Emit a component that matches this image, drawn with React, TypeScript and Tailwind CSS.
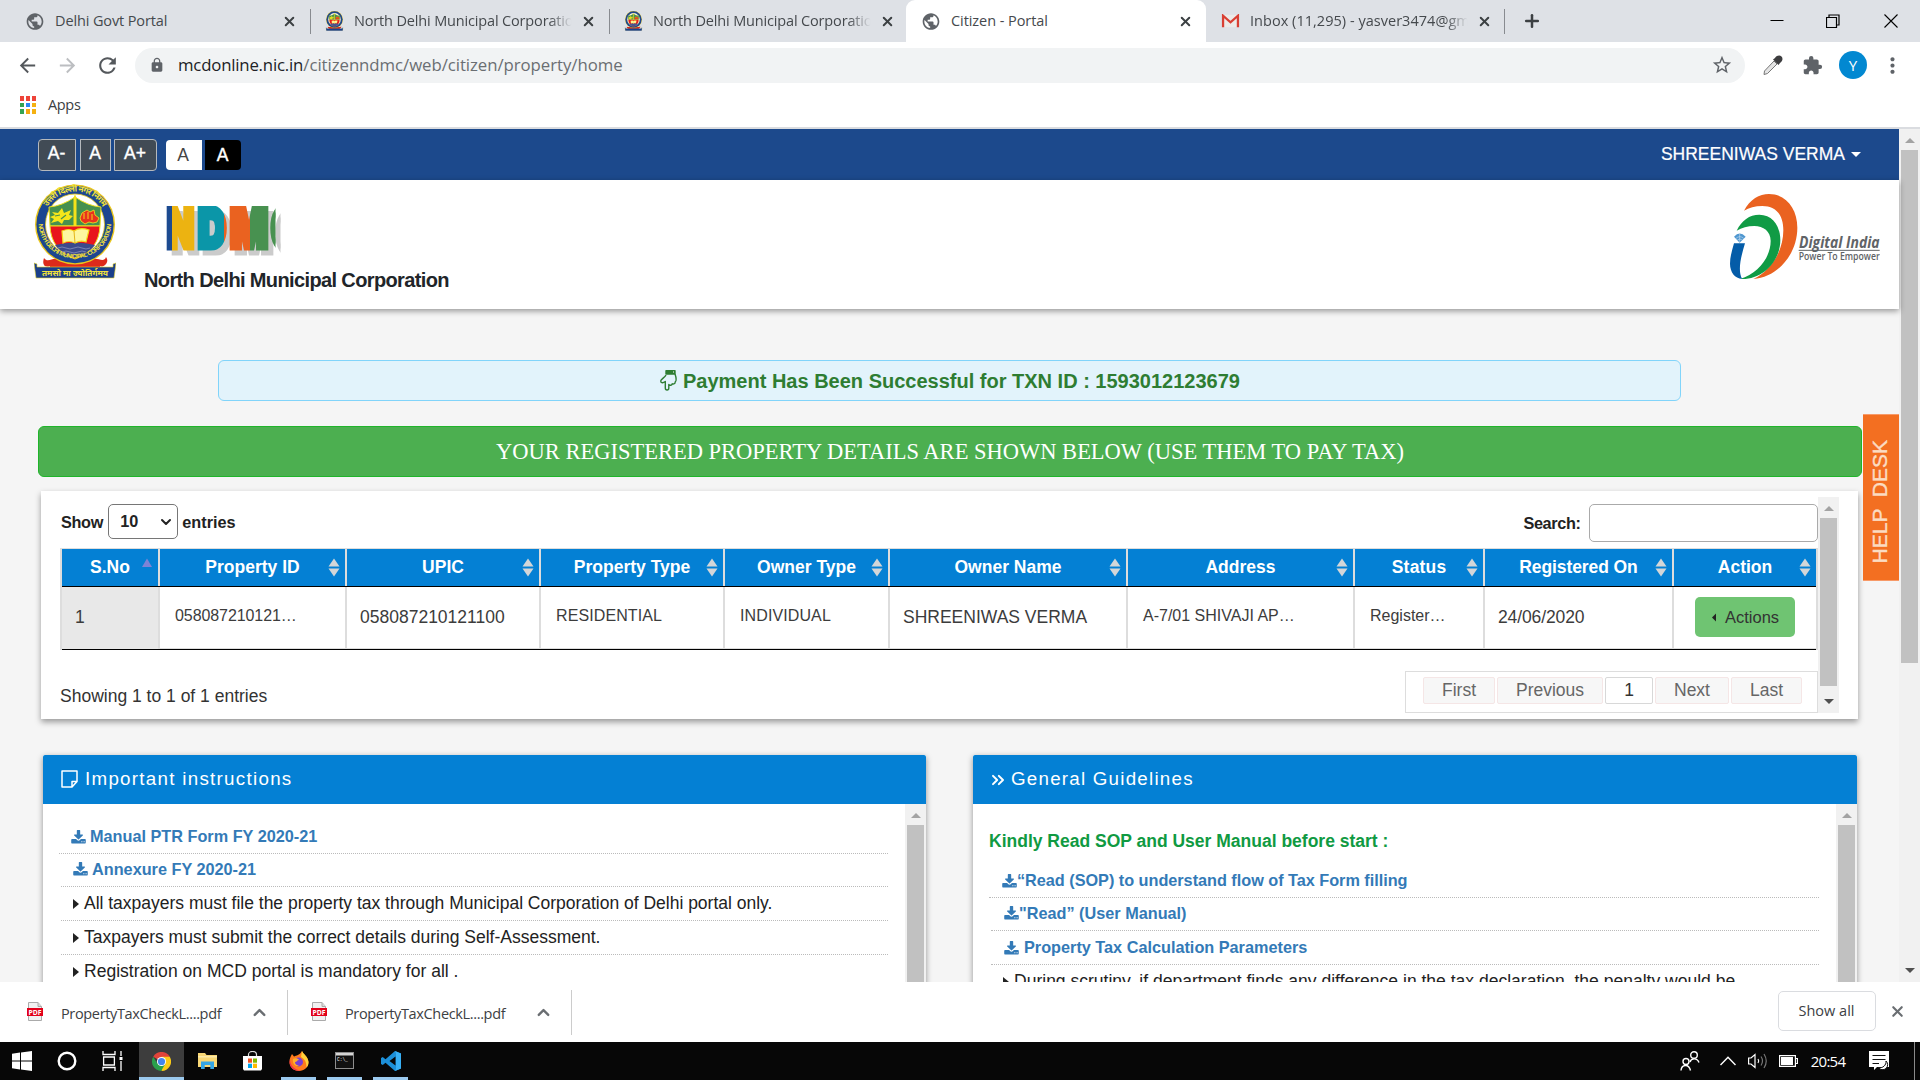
import React, { useLayoutEffect, useRef } from "react";
import { MdPublic, MdExtension, MdLock, MdStarBorder, MdRefresh, MdArrowBack, MdArrowForward, MdMoreVert } from "react-icons/md";
import { X, Plus, ChevronUp, ChevronDown, ChevronsRight } from "lucide-react";

/** A one-line label whose letters are spaced so that it is exactly `w` pixels wide. */
function Label({ w, children, className = "" }: { w: number; children: string; className?: string }) {
  const ref = useRef<HTMLSpanElement>(null);
  useLayoutEffect(() => {
    const el = ref.current;
    if (!el) return;
    el.style.letterSpacing = "0px";
    const spacing = (w - el.offsetWidth) / Math.max(1, children.length - 1);
    el.style.letterSpacing = `${spacing}px`;
    el.style.marginRight = `${-spacing}px`;
  }, [w, children]);
  return (
    <span ref={ref} className={`inline-block shrink-0 whitespace-pre ${className}`}>
      {children}
    </span>
  );
}

function Emblem({ className, lettered = false }: { className: string; lettered?: boolean }) {
  return (
    <svg viewBox="0 0 82 95" className={className}>
      <path d="M10 74 C14 80 20 72 24 76 L58 76 C62 72 70 80 72 73 C76 78 70 84 66 82 L68 88 H14 L16 82 C10 84 8 80 10 74Z" fill="#dd2a1b" />
      <ellipse cx="41" cy="40.5" rx="40" ry="40" fill="#e9c61c" />
      <ellipse cx="41" cy="40.5" rx="38.6" ry="38.8" fill="#1c4690" />
      <ellipse cx="41" cy="40.5" rx="29.5" ry="30.5" fill="#fff" stroke="#e9c61c" strokeWidth="0.8" />
      <path d="M15 23 Q28 22 41 13 Q54 22 67 23 L66 42 H16Z" fill="#46904f" stroke="#eee020" />
      <path d="M16 42 H66 Q65 66 41 75 Q17 66 16 42Z" fill="#e8151d" stroke="#eee020" />
      <path d="M21 61 Q41 56 61 61 Q54 70 41 74 Q28 70 21 61Z" fill="#3b4a8c" />
      <path d="M24 64 q4 -2 8 0 t8 0 t8 0 t8 0 M28 68 q4 -2 8 0 t8 0 t8 0" stroke="#7f89b5" fill="none" strokeWidth="0.9" />
      <path d="M39.5 14 L41 10 L42.5 14 V42 H39.5Z" fill="#f5e21a" />
      <path d="M18 28 l6 1 4 -5 2 5 7 -3 -2 5 4 1 -4 4 -5 0 -2 4 -4 -3 -7 2 3 -4 -4 -2 5 -2z" fill="#f5e61a" />
      <path d="M21 32 l5 -1 M27 35 l5 -4" stroke="#46904f" strokeWidth="1.2" />
      <path d="M46 34 l2 -5 5 -3 3 2 4 -2 1 5 4 3 -2 4 -4 1 -4 -1 -4 2 -4 -3z" fill="#e8321d" stroke="#f5e61a" strokeWidth="0.8" />
      <path d="M50 29 v6 M54 28 v7 M58 30 v6" stroke="#f5e61a" strokeWidth="0.9" />
      <path d="M28 47 Q35 44 40 47 Q46 43 55 46 L52 58 Q46 56 41 59 Q35 56 29 59Z" fill="#fdf6a0" stroke="#f5d91a" strokeWidth="1.2" />
      <path d="M40 47 L41 59" stroke="#e4b51a" />
      <path d="M0 79 L3 80 L3 83 H79 V80 L82 79 L80 94 H2Z" fill="#1b3f8b" stroke="#e9d52a" strokeWidth="0.6" />
      {lettered && (
        <>
          <defs>
            <path id="ringTop" d="M9.5 32 A32.5 32.5 0 0 1 72.5 32" />
            <path id="ringBottom" d="M4.6 38 A36.4 36.4 0 0 0 77.4 38" />
          </defs>
          <text fontSize="8.4" fontWeight="700" fill="#f1e23a" fontFamily="'Noto Sans', 'Noto Sans Devanagari', sans-serif">
            <textPath href="#ringTop" startOffset="10" textLength="66">उत्तरी दिल्ली नगर निगम</textPath>
          </text>
          <text fontSize="6.2" fontWeight="700" fill="#f1e23a" fontFamily="'Liberation Sans', sans-serif">
            <textPath href="#ringBottom" startOffset="2" textLength="110">NORTH DELHI MUNICIPAL CORPORATION</textPath>
          </text>
          <text x="8" y="91.5" fontSize="8" fontWeight="700" fill="#f1e23a" textLength="66" lengthAdjust="spacingAndGlyphs" fontFamily="'Noto Sans', 'Noto Sans Devanagari', sans-serif">तमसो मा ज्योतिर्गमय</text>
        </>
      )}
    </svg>
  );
}

function NdmcMark() {
  return (
    <svg viewBox="0 0 115 52" className="h-[52px] w-[115px] drop-shadow-[5px_5px_0_#cbcbcb]" fontFamily="Inter, 'Liberation Sans', sans-serif" fontWeight="900" fontSize="54.5" strokeWidth="6">
      <defs>
        <linearGradient id="ndmc" gradientUnits="userSpaceOnUse" x1="0" y1="0" x2="115" y2="0">
          <stop offset="0.053" stopColor="#1c4a90" />
          <stop offset="0.053" stopColor="#ecb311" />
          <stop offset="0.26" stopColor="#ecb311" />
          <stop offset="0.26" stopColor="#0b96a8" />
          <stop offset="0.5" stopColor="#0b96a8" />
          <stop offset="0.5" stopColor="#ea6220" />
          <stop offset="0.73" stopColor="#ea6220" />
          <stop offset="0.73" stopColor="#489150" />
        </linearGradient>
        <clipPath id="ndmcFront"><rect width="109.5" height="44.5" /></clipPath>
      </defs>
      <g clipPath="url(#ndmcFront)" fill="url(#ndmc)" stroke="url(#ndmc)">
        <text x="1" y="41.5" textLength="27" lengthAdjust="spacingAndGlyphs">N</text>
        <text x="32" y="41.5" textLength="28" lengthAdjust="spacingAndGlyphs">D</text>
        <text x="64" y="41.5" textLength="38" lengthAdjust="spacingAndGlyphs">M</text>
        <text x="105" y="41.5" textLength="26" lengthAdjust="spacingAndGlyphs">C</text>
      </g>
    </svg>
  );
}

function DigitalIndia() {
  return (
    <svg viewBox="90 71 450 258" className="h-[86px] w-[150px]">
      <path d="M132 121 C150 87 178 71 207 71 C258 71 292 115 292 172 C292 250 235 320 160 326 C215 300 250 240 250 180 C250 130 225 107 187 107 C165 107 147 112 132 121Z" fill="#ea6220" />
      <path d="M110 181 C125 150 148 133 178 133 C217 133 241 165 241 210 C241 270 190 330 120 326 C175 310 212 260 212 212 C212 183 190 167 163 167 C143 167 125 172 110 181Z" fill="#109b45" />
      <path d="M102 219 L135 219 C124 255 112 300 126 325 C105 325 90 305 90 280 C90 260 96 240 102 219Z" fill="#045ca8" />
      <path d="M102 199 Q119 180 137 199 L119 217Z" fill="#4f97d0" />
      <path d="M108 204 Q119 194 131 204 M112 209 Q119 203 127 209 M119 190 V215" stroke="#d5e6f5" strokeWidth="1.6" fill="none" />
      <g fontFamily="'Open Sans', sans-serif" fill="#606366">
        <text x="297" y="234" fontSize="47" fontWeight="700" fontStyle="italic" textLength="242" lengthAdjust="spacingAndGlyphs">Digital India</text>
        <text x="296" y="270" fontSize="30" fontWeight="600" textLength="243" lengthAdjust="spacingAndGlyphs">Power To Empower</text>
      </g>
      <path d="M296 240 H539" stroke="#606366" strokeWidth="3" />
    </svg>
  );
}

function Gmail() {
  return (
    <svg viewBox="0 0 20 16" className="h-[14px] w-[19px]">
      <rect x="1" y="1" width="18" height="14" fill="#eceae8" />
      <path d="M1.5 15 V2 L10 9.5 L18.5 2 V15" fill="none" stroke="#d93f33" strokeWidth="2.6" />
    </svg>
  );
}

function Tab({ icon, title, w, fade = false }: { icon: React.ReactNode; title: string; w: number; fade?: boolean }) {
  return (
    <>
      <span className="flex w-5 shrink-0 justify-center">{icon}</span>
      <span className={fade ? "ml-[10px] w-[222px] shrink-0 overflow-hidden pb-[2px] [mask-image:linear-gradient(90deg,#000_88%,transparent_98%)]" : "ml-[10px] w-[222px] shrink-0 pb-[2px]"}>
        <Label w={w} className="text-[14.5px] text-[#45494d]">{title}</Label>
      </span>
      <X className="ml-[5px] size-[15px] shrink-0 text-[#3c4043]" strokeWidth={3.2} />
    </>
  );
}

function TabStrip() {
  const globe = <MdPublic className="size-[21px] text-[#5f6368]" />;
  const crest = <Emblem className="h-[20px] w-[19px]" />;
  return (
    <div className="flex h-[42px] items-center bg-[#dee1e6]">
      <div className="flex h-[25px] w-[311px] items-center border-r border-[#888b90] pl-[25px]">
        <Tab icon={globe} title="Delhi Govt Portal" w={112} />
      </div>
      <div className="flex h-[25px] w-[299px] items-center border-r border-[#888b90] pl-[13px]">
        <Tab icon={crest} title="North Delhi Municipal Corporation" w={228} fade />
      </div>
      <div className="flex h-[42px] w-[296px] items-center pl-[13px]">
        <Tab icon={crest} title="North Delhi Municipal Corporation" w={228} fade />
      </div>
      <div className="flex h-[42px] w-[300px] items-center rounded-t-[9px] bg-white pl-[15px]">
        <Tab icon={globe} title="Citizen - Portal" w={97} />
      </div>
      <div className="flex h-[25px] w-[299px] items-center border-r border-[#888b90] pl-[14px]">
        <Tab icon={<Gmail />} title="Inbox (11,295) - yasver3474@gmail" w={235} fade />
      </div>
      <Plus className="ml-[17px] size-5 text-[#3c4043]" strokeWidth={3} />
      <div className="ml-auto flex h-[36px] items-center">
        <svg viewBox="0 0 14 14" className="mr-[42px] size-[14px]"><path d="M0.5 6.5 H13.5" stroke="#000" /></svg>
        <svg viewBox="0 0 14 14" className="mr-[44px] size-[14px]"><path d="M0.5 3.5 H10.5 V13.5 H0.5Z M3 3 V1 H13 V11 H11" fill="none" stroke="#000" strokeWidth="1.2" /></svg>
        <svg viewBox="0 0 14 14" className="mr-[22px] size-[14px]"><path d="M0.5 0.5 L13.5 13.5 M13.5 0.5 L0.5 13.5" stroke="#000" strokeWidth="1.1" /></svg>
      </div>
    </div>
  );
}

function Dropper() {
  return (
    <svg viewBox="0 0 20 20" className="ml-[18px] size-5">
      <path d="M11 6 L14 9 L4.5 18.5 L1 19.5 L1.5 16Z" fill="#e4e4e4" stroke="#777" />
      <path d="M10 4.5 L12 3 C14 0 17 0 18.5 1.5 C20 3 20 6 17 8 L15.5 10Z" fill="#3d3d3f" />
    </svg>
  );
}

function Toolbar() {
  return (
    <div className="flex h-[46px] items-center bg-white">
      <MdArrowBack className="ml-[16px] size-[23px] text-[#54585c]" />
      <MdArrowForward className="ml-[17px] size-[23px] text-[#bcbec1]" />
      <MdRefresh className="ml-[16px] size-[25px] text-[#54585c]" />
      <div className="ml-[15px] flex h-[35px] w-[1610px] items-center rounded-full bg-[#f1f3f4] pl-[14px] pr-[12px]">
        <MdLock className="size-4 text-[#5f6368]" />
        <span className="ml-[13px] flex text-[16.8px]">
          <Label w={125} className="text-[#202124]">mcdonline.nic.in</Label>
          <Label w={319} className="text-[#6a6e72]">/citizenndmc/web/citizen/property/home</Label>
        </span>
        <MdStarBorder className="ml-auto size-[22px] text-[#5f6368]" />
      </div>
      <Dropper />
      <MdExtension className="ml-[19px] size-[21px] text-[#5f6368]" />
      <span className="ml-[16px] flex size-[28px] items-center justify-center rounded-full bg-[#0288d1] text-[15px] text-white">Y</span>
      <MdMoreVert className="ml-[13px] size-[25px] text-[#5f6368]" />
    </div>
  );
}

function AppsBar() {
  const colours = ["bg-[#ee4439]", "bg-[#ee4439]", "bg-[#ee4439]", "bg-[#34a352]", "bg-[#2b86f3]", "bg-[#f5b111]", "bg-[#34a352]", "bg-[#f5a70f]", "bg-[#f5b111]"];
  return (
    <div className="flex h-[41px] items-start border-b-2 border-[#dadce0] bg-white pt-[8px]">
      <div className="ml-[20px] grid grid-cols-3 gap-[2px]">
        {colours.map((c, i) => <span key={i} className={`h-[4.5px] w-1 ${c}`} />)}
      </div>
      <Label w={33} className="ml-[12px] mt-[-1px] text-[14.5px] leading-[20px] text-[#3c4043]">Apps</Label>
    </div>
  );
}

/** Vertical scrollbar: an up arrow, then the thumb. */
function ScrollBar({ className, thumb, down = false }: { className: string; thumb: string; down?: boolean }) {
  return (
    <div className={`flex w-[21px] shrink-0 flex-col items-center bg-[#f1f1f1] ${className}`}>
      <svg viewBox="0 0 10 5" className="mb-[7px] mt-[9px] h-[5px] w-[10px] shrink-0"><path d="M0 5 L5 0 L10 5Z" fill="#a3a3a3" /></svg>
      <div className={`w-[17px] shrink-0 bg-[#c1c1c1] ${thumb}`} />
      {down && <svg viewBox="0 0 10 5" className="mb-[9px] mt-auto h-[5px] w-[10px] shrink-0"><path d="M0 0 L5 5 L10 0Z" fill="#505050" /></svg>}
    </div>
  );
}

function TopBar() {
  const box = "flex h-[32px] items-start justify-center border border-[#b5b9bd] bg-[#414b55] pt-[3px] pr-[1px] text-[17.5px] leading-[20px] text-white [-webkit-text-stroke:0.4px_white]";
  return (
    <div className="flex h-[51px] items-center bg-[#1c498c] pl-[38px]">
      <span className={`${box} w-[38px] rounded-l-[4px]`}>A-</span>
      <span className={`${box} ml-[4px] w-[31px]`}>A</span>
      <span className={`${box} ml-[3px] w-[43px] rounded-r-[4px]`}>A+</span>
      <span className="ml-[9px] flex h-[30px] w-[36px] items-center justify-center rounded-l-[4px] bg-white pr-[2px] pt-[2px] text-[17.5px] text-[#444]">A</span>
      <span className="ml-[3px] flex h-[30px] w-[36px] items-center justify-center rounded-r-[4px] bg-black pr-px pt-[2px] text-[17.5px] text-white [-webkit-text-stroke:0.4px_white]">A</span>
      <div className="ml-auto mr-[38px] flex items-center">
        <Label w={184} className="text-[17.5px] text-white [-webkit-text-stroke:0.2px_white]">SHREENIWAS VERMA</Label>
        <svg viewBox="0 0 10 5" className="ml-[6px] h-[5px] w-[10px]"><path d="M0 0 H10 L5 5Z" fill="#fff" /></svg>
      </div>
    </div>
  );
}

function SortIcon({ asc = false }: { asc?: boolean }) {
  return (
    <svg viewBox="0 0 12 19" className="ml-px h-[19px] w-[12px]">
      {asc ? (
        <path d="M1 9 L6 0.5 L11 9Z" fill="#7e83d6" />
      ) : (
        <path d="M0.5 8.5 L6 0.5 L11.5 8.5Z M0.5 10.5 L6 18.5 L11.5 10.5Z" fill="#d3d6d8" />
      )}
    </svg>
  );
}

const COLS = "grid grid-cols-[98px_187px_194px_184px_165px_238px_227px_130px_189px_142px]";

const HEADS: [string, number][] = [
  ["S.No", 40], ["Property ID", 94], ["UPIC", 42], ["Property Type", 116], ["Owner Type", 99],
  ["Owner Name", 107], ["Address", 70], ["Status", 54], ["Registered On", 119], ["Action", 54],
];

const CELLS: [string, number, string][] = [
  ["058087210121…", 122, "pl-[15px] pb-1 text-[16px]"],
  ["058087210121100", 145, "pl-[13px] pb-[2px] text-[17.5px]"],
  ["RESIDENTIAL", 106, "pl-[15px] pb-1 text-[16px]"],
  ["INDIVIDUAL", 91, "pl-[15px] pb-1 text-[16px]"],
  ["SHREENIWAS VERMA", 184, "pl-[13px] pb-[2px] text-[17.5px]"],
  ["A-7/01 SHIVAJI AP…", 152, "pl-[15px] pb-1 text-[16px]"],
  ["Register…", 76, "pl-[15px] pb-1 text-[16px]"],
  ["24/06/2020", 87, "pl-[13px] pb-[2px] text-[17.5px]"],
];

function PropertyTable() {
  return (
    <div className="border-l-2 border-r-2 border-[#ddd]">
      <div className={`${COLS} h-[39px] border-b border-t border-b-black border-t-[#ddd] bg-[#0480d4]`}>
        {HEADS.map(([t, w], i) => (
          <div key={t} className={`flex items-center ${i < 9 ? "border-r-2 border-[#ddd]" : ""}`}>
            <span className="w-[18px]" />
            <span className="flex flex-1 justify-center"><Label w={w} className="text-[17.5px] font-bold text-white">{t}</Label></span>
            <span className="w-[18px]"><SortIcon asc={i === 0} /></span>
          </div>
        ))}
      </div>
      <div className={`${COLS} h-[63px] border-b border-b-black text-[#3c3c3c] shadow-[inset_0_-1px_0_#ddd]`}>
        <div className="flex items-center border-r-2 border-[#ddd] bg-[#e8e8e8] pb-[2px] pl-[13px] text-[17.5px]">1</div>
        {CELLS.map(([t, w, c]) => (
          <div key={t} className={`flex items-center border-r-2 border-[#ddd] ${c}`}><Label w={w}>{t}</Label></div>
        ))}
        <div className="flex items-center justify-center pb-[2px]">
          <button className="flex h-[40px] w-[100px] items-center rounded-[5px] bg-[#6fc472] pl-[17px] text-[#333]">
            <svg viewBox="0 0 5 10" className="h-[9px] w-[4px]"><path d="M5 0 V10 L0 5Z" fill="#222" /></svg>
            <Label w={54} className="ml-[9px] text-[16.5px]">Actions</Label>
          </button>
        </div>
      </div>
    </div>
  );
}

function PageButton({ label, w, className }: { label: string; w: number; className: string }) {
  return (
    <span className={`flex h-[27px] items-center justify-center rounded-[2px] border text-[17.5px] ${className}`}><Label w={w}>{label}</Label></span>
  );
}

function TableCard() {
  const idle = "border-[#f5e6e6] bg-[#f7f7f7] text-[#666]";
  return (
    <section className="ml-[41px] mt-[14px] flex h-[228px] w-[1817px] bg-white pt-[6px] shadow-[0_3px_6px_rgba(0,0,0,0.38)]">
      <div className="ml-[19px] w-[1758px]">
        <div className="flex h-[51px] items-start pt-[7px] text-[16.25px] font-bold text-[#222]">
          <Label w={42} className="ml-[1px] mt-[6px]">Show</Label>
          <span className="ml-[5px] flex h-[35px] w-[70px] items-center rounded-[5px] border border-[#767676] bg-white pl-[11px]">
            <Label w={18}>10</Label>
            <ChevronDown className="ml-[20px] size-[16px] shrink-0" strokeWidth={3} />
          </span>
          <Label w={53} className="ml-[4px] mt-[6px]">entries</Label>
          <Label w={58} className="ml-auto mt-[7px]">Search:</Label>
          <span className="ml-[8px] h-[38px] w-[229px] rounded-[5px] border border-[#aaa] bg-white" />
        </div>
        <PropertyTable />
        <div className="flex items-start text-[#333]">
          <Label w={207} className="mt-[33px] text-[17.5px]">Showing 1 to 1 of 1 entries</Label>
          <div className="ml-auto mt-[21px] flex h-[42px] w-[413px] gap-[2px] border border-[#ddd] pl-[17px] pt-[5px]">
            <PageButton label="First" w={34} className={`w-[72px] ${idle}`} />
            <PageButton label="Previous" w={68} className={`w-[106px] ${idle}`} />
            <PageButton label="1" w={9} className="w-[48px] border-[#d8d8d8] bg-white text-[#333]" />
            <PageButton label="Next" w={36} className={`w-[74px] ${idle}`} />
            <PageButton label="Last" w={33} className={`w-[71px] ${idle}`} />
          </div>
        </div>
      </div>
      <ScrollBar className="h-[216px]" thumb="h-[168px]" down />
    </section>
  );
}

function DownloadGlyph() {
  return (
    <svg viewBox="64 0 1664 1600" className="h-[14px] w-[15px] shrink-0" fill="#337ab7">
      <path d="M1344 1344q0-26-19-45t-45-19-45 19-19 45 19 45 45 19 45-19 19-45zm256 0q0-26-19-45t-45-19-45 19-19 45 19 45 45 19 45-19 19-45zm128-224v320q0 40-28 68t-68 28h-1472q-40 0-68-28t-28-68v-320q0-40 28-68t68-28h465l135 136q58 56 136 56t136-56l136-136h464q40 0 68 28t28 68zm-325-569q17 41-14 70l-448 448q-18 19-45 19t-45-19l-448-448q-31-29-14-70 17-39 59-39h256v-448q0-26 19-45t45-19h256q26 0 45 19t19 45v448h256q42 0 59 39z" />
    </svg>
  );
}

function Link({ text, w, indent, gap, className }: { text: string; w: number; indent: string; gap: string; className: string }) {
  return (
    <li className={`flex items-center border-b border-dotted border-[#bbb] ${indent} ${className}`}>
      <DownloadGlyph />
      <Label w={w} className={`text-[16.25px] font-bold text-[#337ab7] ${gap}`}>{text}</Label>
    </li>
  );
}

function Point({ text, w, className }: { text: string; w: number; className: string }) {
  return (
    <li className={`flex shrink-0 items-center border-b border-dotted border-[#bbb] pl-[12px] ${className}`}>
      <svg viewBox="0 0 6 10" className="h-[10px] w-[6px] shrink-0"><path d="M0 0 L6 5 L0 10Z" fill="#222" /></svg>
      <Label w={w} className="ml-[5px] text-[17.5px] text-[#222]">{text}</Label>
    </li>
  );
}

function StickyNote() {
  return (
    <svg viewBox="0 0 17 18" className="mb-[2px] mr-[7px] h-[18px] w-[17px]" fill="none" stroke="#fff" strokeWidth="1.5">
      <path d="M1 1 H16 V11.5 L11 17 H1Z M16 11.5 H11 V17" strokeLinejoin="round" />
    </svg>
  );
}

function HandDown() {
  return (
    <svg viewBox="0 0 17 21" className="h-[21px] w-[17px]" fill="none" stroke="#2e7d32" strokeWidth="1.4" strokeLinejoin="round">
      <path d="M6 0.7 H15 V4 H6Z" fill="#2e7d32" />
      <path d="M13 2 h1" stroke="#fff" strokeWidth="1.2" />
      <path d="M6 5 C5 7.5 0.7 9 0.7 11 C0.7 13.3 3.2 13.3 5.3 11.5 V18 C5.3 20.6 8.8 20.6 8.8 18 V14.5 C10 15.8 12 15.3 12.2 13.8 C13.8 14.5 15.2 13.6 15.2 12 C16.6 11.5 16.3 7.5 15 4" />
    </svg>
  );
}

function Panel({ icon, title, w, children, className }: { icon: React.ReactNode; title: string; w: number; children: React.ReactNode; className: string }) {
  return (
    <section className={`flex h-[260px] flex-col bg-white shadow-[0_2px_6px_rgba(0,0,0,0.4)] ${className}`}>
      <header className="flex h-[49px] shrink-0 items-center rounded-t-[2px] bg-[#0480d4] pl-[18px] text-white">
        {icon}
        <Label w={w} className="mb-px text-[18.75px]">{title}</Label>
      </header>
      <div className="flex min-h-0 flex-1">
        <div className="flex-1 overflow-hidden">{children}</div>
        <ScrollBar className="" thumb="h-[220px]" />
      </div>
    </section>
  );
}

function HelpDesk() {
  return (
    <aside className="absolute right-0 top-[285px] flex h-[167px] w-[36px] items-center justify-center border-y border-[#f79a68] bg-[#f36f21] pt-[9px]">
      <span className="-rotate-90 pb-[2px]"><Label w={123} className="text-[21px] text-[#fbdcc2] [-webkit-text-stroke:0.4px_#fbdcc2]">HELP  DESK</Label></span>
    </aside>
  );
}

function Page() {
  return (
    <div className="flex h-[853px] overflow-hidden">
      <main className="relative w-[1899px] bg-[#f5f5f5] font-['Liberation_Sans',Arial,sans-serif]">
        <TopBar />
        <header className="flex h-[129px] items-start bg-white shadow-[0_2px_6px_rgba(0,0,0,0.4)]">
          <Emblem className="ml-[34px] mt-[4px] h-[95px] w-[82px]" lettered />
          <div className="ml-[28px] pt-[26px]">
            <div className="ml-[22px]"><NdmcMark /></div>
            <Label w={306} className="mt-[10px] text-[20px] font-bold leading-[24px] text-[#212529]">North Delhi Municipal Corporation</Label>
          </div>
          <div className="ml-auto mr-[19px] mt-[14px]"><DigitalIndia /></div>
        </header>
        <div className="ml-[218px] mt-[51px] flex h-[41px] w-[1463px] items-center rounded-[6px] border border-[#81d4fa] bg-[#e2f3fb] pl-[441px] text-[#2e7d32]">
          <HandDown />
          <Label w={557} className="ml-[6px] text-[20px] font-bold">Payment Has Been Successful for TXN ID : 1593012123679</Label>
        </div>
        <div className="ml-[38px] mt-[25px] flex h-[51px] w-[1824px] items-center justify-center rounded-[6px] border border-[#1fb52a] bg-[#4caf50] text-white">
          <Label w={908} className="font-['Liberation_Serif',serif] text-[22.5px]">YOUR REGISTERED PROPERTY DETAILS ARE SHOWN BELOW (USE THEM TO PAY TAX)</Label>
        </div>
        <TableCard />
        <div className="mt-[36px] flex">
          <Panel className="ml-[43px] w-[883px]" title="Important instructions" w={206} icon={<StickyNote />}>
            <ul className="ml-[18px] w-[827px] pt-[14px]">
              <Link text="Manual PTR Form FY 2020-21" w={227} indent="-ml-[2px] pl-[12px]" gap="ml-[4px]" className="h-[36px] pt-[2px]" />
              <Link text="Annexure FY 2020-21" w={164} indent="pl-[12px]" gap="ml-[4px]" className="h-[33px] pb-[2px]" />
              <Point text="All taxpayers must file the property tax through Municipal Corporation of Delhi portal only." w={688} className="h-[34px]" />
              <Point text="Taxpayers must submit the correct details during Self-Assessment." w={516} className="h-[34px]" />
              <Point text="Registration on MCD portal is mandatory for all ." w={374} className="h-[34px]" />
            </ul>
          </Panel>
          <Panel className="ml-[47px] w-[884px]" title="General Guidelines" w={182} icon={<ChevronsRight className="-ml-[3px] mr-[3px] size-[20px]" strokeWidth={2.4} />}>
            <div className="ml-[18px] w-[828px] pt-[25px]">
              <Label w={399} className="-ml-[2px] text-[17.5px] font-bold leading-[24px] text-[#109a42]">Kindly Read SOP and User Manual before start :</Label>
              <ul className="pt-[8px]">
                <Link text="“Read (SOP) to understand flow of Tax Form filling" w={391} indent="-ml-[2px] pl-[13px]" gap="" className="h-[36px] pt-[2px]" />
                <Link text={"\"Read” (User Manual)"} w={168} indent="pl-[13px]" gap="" className="h-[33px] pb-[2px]" />
                <Link text="Property Tax Calculation Parameters" w={283} indent="pl-[13px]" gap="ml-[5px]" className="h-[34px]" />
                <Point text="During scrutiny, if department finds any difference in the tax declaration, the penalty would be" w={721} className="h-[34px]" />
              </ul>
            </div>
          </Panel>
        </div>
        <HelpDesk />
      </main>
      <ScrollBar className="h-[853px]" thumb="h-[513px]" down />
    </div>
  );
}

function PdfIcon() {
  return (
    <svg viewBox="0 0 16 19" className="h-[19px] w-[16px]">
      <path d="M1.5 0.5 H11 L14.5 4.5 V18.5 H1.5Z" fill="#f1f1f1" stroke="#aaa" />
      <path d="M11 0.5 V4.5 H14.5" fill="#ddd" stroke="#aaa" />
      <rect y="6" width="16" height="8" fill="#e2001a" />
      <text x="1.5" y="12.6" fontSize="7" fontWeight="700" fill="#fff" textLength="13" lengthAdjust="spacingAndGlyphs" fontFamily="'Open Sans', sans-serif">PDF</text>
    </svg>
  );
}

function Download({ className }: { className: string }) {
  return (
    <div className={`flex h-[45px] items-center border-r border-[#ccc] ${className}`}>
      <span className="mb-[2px]"><PdfIcon /></span>
      <Label w={161} className="ml-[18px] mt-[3px] text-[14.5px] text-[#3c4043]">PropertyTaxCheckL....pdf</Label>
      <ChevronUp className="ml-[28px] size-[19px] text-[#6a6e72]" strokeWidth={3} />
    </div>
  );
}

function Downloads() {
  return (
    <div className="flex h-[60px] items-center bg-white">
      <Download className="w-[288px] pl-[27px]" />
      <Download className="w-[284px] pl-[23px]" />
      <span className="mb-[2px] ml-auto flex h-[40px] w-[98px] items-center justify-center rounded-[5px] border border-[#dadce0] pr-px">
        <Label w={56} className="text-[14.5px] text-[#3c4043]">Show all</Label>
      </span>
      <X className="mb-[2px] ml-[13px] mr-[14px] size-[17px] text-[#6a6e72]" strokeWidth={3} />
    </div>
  );
}

function Taskbar() {
  return (
    <div className="flex h-[38px] items-center bg-[#070707] text-white">
      <svg viewBox="0 0 20 20" className="ml-[12px] size-5" fill="#fff"><path d="M0 2.7 L8 1.6 V9.5 H0Z M9 1.4 L20 0 V9.5 H9Z M0 10.5 H8 V18.4 L0 17.3Z M9 10.5 H20 V20 L9 18.6Z" /></svg>
      <svg viewBox="0 0 20 20" className="ml-[25px] size-5"><circle cx="10" cy="10" r="8.3" fill="none" stroke="#fff" strokeWidth="2.4" /></svg>
      <svg viewBox="0 0 21 20" className="ml-[25px] h-5 w-[21px]" fill="none" stroke="#fff" strokeWidth="1.3"><path d="M1 0 V3.5 H13 V0 M1 20 V16.5 H13 V20 M1.6 6 H12.4 V14 H1.6Z M19 0 V5 M19 10 V20" /><path d="M17.5 6 H20.5 V9 H17.5Z" fill="#fff" stroke="none" /></svg>
      <span className="ml-[16px] flex h-[38px] w-[45px] items-center justify-center border-b-[3px] border-[#9bc9ee] bg-[#3d3d3d] pt-[3px] pr-[1px]">
        <svg viewBox="0 0 20 20" className="size-[19px]">
          <path d="M10 10 L1.3 5 A10 10 0 0 1 18.7 5Z" fill="#e0443a" />
          <path d="M10 10 V5 H18.7 A10 10 0 0 1 10 20Z" fill="#fbcb16" />
          <path d="M10 10 L13.9 12.5 L9.6 20 A10 10 0 0 1 1.3 5 L5.8 12.4Z" fill="#2aa04c" />
          <circle cx="10" cy="10" r="4.8" fill="#fff" /><circle cx="10" cy="10" r="3.8" fill="#4486ee" />
        </svg>
      </span>
      <svg viewBox="0 0 19 18" className="ml-[14px] h-[18px] w-[19px]"><path d="M0 1 H7 L8.5 3 H19 V15 H0Z" fill="#f8d775" /><path d="M0 4 H19 V5.5 H0Z" fill="#fdeaaa" /><path d="M3 9.5 H16 V17 H12.3 V13 H6.7 V17 H3Z" fill="#33a5e5" /></svg>
      <svg viewBox="0 0 19 20" className="ml-[26px] h-5 w-[19px]"><path d="M5.5 5 V3.5 A4 3 0 0 1 13.5 3.5 V5" fill="none" stroke="#ddd" strokeWidth="1.2" /><path d="M0 5 H19 V18 L18 19.5 H1 L0 18Z" fill="#fff" /><path d="M5 7.5 H9 V11.7 H5Z" fill="#f25022" /><path d="M10 7.5 H14 V11.7 H10Z" fill="#7fba00" /><path d="M5 12.7 H9 V17 H5Z" fill="#00a4ef" /><path d="M10 12.7 H14 V17 H10Z" fill="#ffb900" /></svg>
      <span className="ml-[19px] flex h-[38px] w-[35px] items-center justify-center border-b-[3px] border-[#9bc9ee] pt-[2px]">
        <svg viewBox="0 0 20 20" className="size-5">
          <path d="M13 0 C14 3 19 5 19.5 11 C19.5 16.5 15 20 10 20 C4.5 20 .5 16 .5 11 C.5 7 2 5 3 3 L5 5.5 C7 4.5 11 4 13 0Z" fill="#ff7a1c" />
          <path d="M13 0 C14 3 19 5 19.5 11 C19.5 13 19 15 17.5 16.5 C17.5 10 15 8 12 6Z" fill="#ffd23a" />
          <path d="M1 8 C1 15 6 19 12 19.5 C5 21 .5 16 .5 11Z" fill="#f0304f" />
          <circle cx="9.6" cy="11" r="4.4" fill="#7a3fd0" />
          <path d="M4 8 C6 6.5 9 7 10 9 C8 9 8 11 6 11 C6 13 7.5 14.5 10 14.5 C7 16.5 3 13 4 8Z" fill="#ffae2c" />
        </svg>
      </span>
      <span className="ml-[11px] flex h-[38px] w-[35px] items-center justify-center border-b-[3px] border-[#9bc9ee] pt-[2px]">
        <svg viewBox="0 0 19 17" className="h-[17px] w-[19px]"><rect x="0.5" y="0.5" width="18" height="16" fill="#111" stroke="#8d8d8d" /><path d="M1 1 H18 V3.5 H1Z" fill="#d5d5d5" /><text x="2" y="8.5" fontSize="4.5" fill="#fff" fontFamily="'Liberation Mono', monospace">C:\_</text></svg>
      </span>
      <span className="ml-[11px] flex h-[38px] w-[35px] items-center justify-center border-b-[3px] border-[#9bc9ee] pt-[2px]">
        <svg viewBox="0 0 20 20" className="size-5"><path d="M14 0 L20 2.5 V17.5 L14 20 L4.5 11.8 L1.8 14 L0 13 V7 L1.8 6 L4.5 8.2Z M14.5 5.5 L8.5 10 L14.5 14.5Z" fill="#1c8fd8" fillRule="evenodd" /><path d="M14 0 L20 2.5 V17.5 L14 20 L15 18 V2Z" fill="#38b0f5" /></svg>
      </span>
      <div className="ml-auto flex items-center">
        <svg viewBox="0 0 20 20" className="size-5" fill="none" stroke="#fff" strokeWidth="1.4"><circle cx="14" cy="4" r="3.3" /><circle cx="6" cy="10.5" r="3" /><path d="M10 11 C11 7 17 6.5 19 11.5 M1 19.5 C1.5 13 9 12.5 10.5 19.5" /></svg>
        <svg viewBox="0 0 16 10" className="ml-[20px] h-[10px] w-[16px]"><path d="M0.5 9 L8 1.2 L15.5 9" fill="none" stroke="#fff" strokeWidth="1.4" /></svg>
        <svg viewBox="0 0 20 18" className="ml-[12px] h-[18px] w-[20px]" fill="none" stroke="#fff" strokeWidth="1.2"><path d="M0.6 6 H3 L7 2.5 V15.5 L3 12 H0.6Z M10 7 Q11.5 9 10 11" /><path d="M13 4.5 Q16 9 13 13.5 M16 2 Q20.5 9 16 16" stroke="#777" /></svg>
        <svg viewBox="0 0 19 12" className="ml-[11px] h-[12px] w-[19px]"><path d="M0.6 0.6 H16.4 V11.4 H0.6Z M17 3.5 H18.4 V8.5 H17" fill="none" stroke="#fff" strokeWidth="1.2" /><path d="M2 2 H14 V10 H2Z" fill="#fff" /></svg>
        <Label w={35} className="ml-[13px] text-[15px]">20:54</Label>
        <svg viewBox="0 0 21 20" className="ml-[23px] h-5 w-[21px]"><path d="M0 0 H20 V16 H8 L5 19 V16 H0Z" fill="#fff" /><path d="M3.5 4.5 H16.5 M3.5 8.5 H16.5 M3.5 12.5 H10" stroke="#111" strokeWidth="1.2" /><path d="M17 10 A5 5 0 1 1 9.5 16.5 A6 6 0 0 0 17 10Z" fill="#fff" stroke="#111" /></svg>
        <span className="ml-[24px] mr-[5px] h-[38px] w-px bg-[#8a8a8a]" />
      </div>
    </div>
  );
}

export default function App() {
  return (
    <div className="h-[1080px] w-[1920px] overflow-hidden bg-white font-['Open_Sans','Noto_Sans',sans-serif]">
      <TabStrip />
      <Toolbar />
      <AppsBar />
      <Page />
      <Downloads />
      <Taskbar />
    </div>
  );
}
